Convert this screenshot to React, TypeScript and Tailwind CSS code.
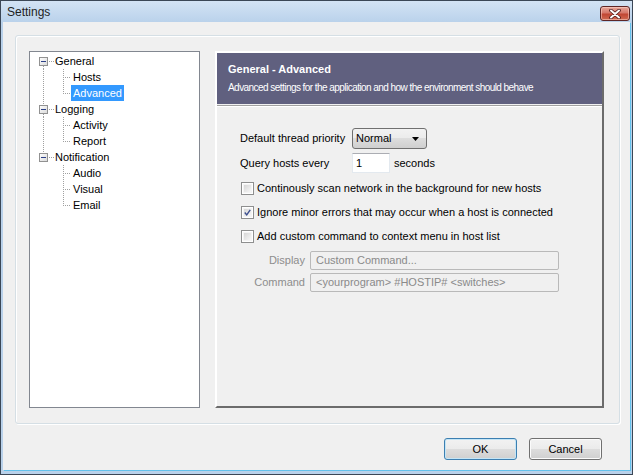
import React from "react";

const DOT = "#a0a0a0";

type Row = {
  label: string;
  root?: boolean;
  first?: boolean;
  hasNext?: boolean;
  cont?: boolean;
  last?: boolean;
  selected?: boolean;
};

const rows: Row[] = [
  { label: "General", root: true, first: true, hasNext: true },
  { label: "Hosts", cont: true },
  { label: "Advanced", cont: true, last: true, selected: true },
  { label: "Logging", root: true, hasNext: true },
  { label: "Activity", cont: true },
  { label: "Report", cont: true, last: true },
  { label: "Notification", root: true },
  { label: "Audio" },
  { label: "Visual" },
  { label: "Email", last: true },
];

function RootGuide({ first, hasNext }: { first?: boolean; hasNext?: boolean }) {
  return (
    <svg width="25" height="16" shapeRendering="crispEdges" className="shrink-0">
      <defs>
        <linearGradient id="exp" x1="0" y1="0" x2="1" y2="1">
          <stop offset="0" stopColor="#ffffff" />
          <stop offset="1" stopColor="#d8d8d8" />
        </linearGradient>
      </defs>
      {!first && <line x1="13.5" y1="0" x2="13.5" y2="4" stroke={DOT} strokeDasharray="1 1" />}
      {hasNext && <line x1="13.5" y1="13" x2="13.5" y2="16" stroke={DOT} strokeDasharray="1 1" />}
      <rect x="9.5" y="4.5" width="8" height="8" fill="url(#exp)" stroke="#919191" />
      <line x1="11" y1="8.5" x2="16" y2="8.5" stroke="#2c3f87" />
      <line x1="19" y1="8.5" x2="24" y2="8.5" stroke={DOT} strokeDasharray="1 1" />
    </svg>
  );
}

function ChildGuide({ cont, last }: { cont?: boolean; last?: boolean }) {
  return (
    <svg width="41" height="16" shapeRendering="crispEdges" className="shrink-0">
      {cont && <line x1="13.5" y1="0" x2="13.5" y2="16" stroke={DOT} strokeDasharray="1 1" />}
      <line x1="33.5" y1="0" x2="33.5" y2={last ? 9 : 16} stroke={DOT} strokeDasharray="1 1" />
      <line x1="35" y1="8.5" x2="41" y2="8.5" stroke={DOT} strokeDasharray="1 1" />
    </svg>
  );
}

function Tree() {
  return (
    <div className="w-[171px] h-[357px] shrink-0 bg-white border border-[#828790] pt-[1px]">
      {rows.map((r) => (
        <div key={r.label} className="flex h-[16px] leading-[16px] items-center">
          {r.root ? <RootGuide first={r.first} hasNext={r.hasNext} /> : <ChildGuide cont={r.cont} last={r.last} />}
          <span
            className={
              r.selected
                ? "bg-[#3399ff] text-white px-[2px] h-[16px]"
                : r.root
                ? "pl-[0px] text-black"
                : "pl-[2px] text-black"
            }
          >
            {r.label}
          </span>
        </div>
      ))}
    </div>
  );
}

function Checkbox({ checked }: { checked?: boolean }) {
  return (
    <div className="w-[13px] h-[13px] shrink-0 border border-[#8e8f8f] bg-white p-[1px]">
      <div className="w-full h-full bg-[linear-gradient(135deg,#d6d6d6,#f7f7f7)] border border-[#f4f4f4] flex items-center justify-center">
        {checked && (
          <svg width="9" height="9" viewBox="0 0 9 9">
            <path d="M1 4.5 L3.5 7.5 L8 1" fill="none" stroke="#3d4f8f" strokeWidth="1.8" />
          </svg>
        )}
      </div>
    </div>
  );
}

function CheckRow({ checked, label }: { checked?: boolean; label: string }) {
  return (
    <div className="flex items-center h-[13px] ml-[1px] gap-[3px]">
      <Checkbox checked={checked} />
      <span className="leading-[13px]">{label}</span>
    </div>
  );
}

function Panel() {
  return (
    <div className="w-[389px] h-[357px] shrink-0 flex flex-col border-t-2 border-l-2 border-t-white border-l-white border-r-2 border-b-2 border-r-[#6c6c6c] border-b-[#6c6c6c]">
      <div className="h-[51px] bg-[#60607f] text-white pl-[11px] pt-[10px]">
        <div className="font-bold text-[11px] leading-[13px]">General - Advanced</div>
        <div className="text-[10px] leading-[12px] mt-[6px] tracking-[-0.55px]">
          Advanced settings for the application and how the environment should behave
        </div>
      </div>
      <div className="mt-[1px] border-t border-[#a0a0a0]" />
      <div className="border-t border-white" />
      <div className="flex flex-col pl-[23px] pt-[21px]">
        <div className="flex items-center h-[21px]">
          <span className="w-[112px]">Default thread priority</span>
          <div className="w-[75px] h-[21px] rounded-[3px] border border-[#707070] bg-[linear-gradient(#f2f2f2_0%,#ebebeb_50%,#dddddd_50%,#cfcfcf_100%)] flex items-center pl-[3px] pr-[7px] justify-between">
            <span className="text-black">Normal</span>
            <svg width="7" height="4" viewBox="0 0 7 4">
              <path d="M0 0 H7 L3.5 4 Z" fill="#000" />
            </svg>
          </div>
        </div>
        <div className="flex items-center h-[20px] mt-[4px]">
          <span className="w-[112px]">Query hosts every</span>
          <div className="w-[38px] h-[20px] bg-white border border-[#e3e9ef] border-t-[#abadb3] pl-[3px] leading-[18px]">1</div>
          <span className="ml-[4px]">seconds</span>
        </div>
        <div className="mt-[9px]">
          <CheckRow label="Continously scan network in the background for new hosts" />
        </div>
        <div className="mt-[11px]">
          <CheckRow checked label="Ignore minor errors that may occur when a host is connected" />
        </div>
        <div className="mt-[11px]">
          <CheckRow label="Add custom command to context menu in host list" />
        </div>
        <div className="flex items-center h-[19px] mt-[8px]">
          <span className="w-[65px] text-right text-[#8d8d8d]">Display</span>
          <div className="ml-[5px] w-[249px] h-[19px] border border-[#b9b9b9] rounded-[2px] bg-[#f0f0f0] text-[#8a8a8a] pl-[5px] leading-[17px]">
            Custom Command...
          </div>
        </div>
        <div className="flex items-center h-[19px] mt-[3px]">
          <span className="w-[65px] text-right text-[#8d8d8d]">Command</span>
          <div className="ml-[5px] w-[249px] h-[19px] border border-[#b9b9b9] rounded-[2px] bg-[#f0f0f0] text-[#8a8a8a] pl-[5px] leading-[17px]">
            {"<yourprogram> #HOSTIP# <switches>"}
          </div>
        </div>
      </div>
    </div>
  );
}

function Button({ label, focused }: { label: string; focused?: boolean }) {
  return (
    <div
      className={
        "w-[73px] h-[22px] rounded-[3px] border flex items-center justify-center bg-[linear-gradient(#f2f2f2_0%,#ebebeb_50%,#dddddd_50%,#cfcfcf_100%)] " +
        (focused ? "border-[#3c7fb1] shadow-[inset_0_0_0_1px_#c4e5f6]" : "border-[#707070] shadow-[inset_0_0_0_1px_#fbfbfb]")
      }
    >
      {label}
    </div>
  );
}

export default function App() {
  return (
    <div className="w-[633px] h-[475px] flex flex-col border border-[#3b4756] bg-[#b9d1ea] font-['Liberation_Sans',Arial,sans-serif] text-[11px] text-black overflow-hidden">
      {/* Title bar */}
      <div className="h-[21px] shrink-0 flex items-center justify-between pl-[6px] pr-[2px] bg-[linear-gradient(#d3e3f4,#bad2eb)]">
        <span className="text-[12px] text-[#1e1e1e] leading-[14px] mt-[1px]">Settings</span>
        <div className="w-[30px] h-[15px] mt-[4px] rounded-[3px] border border-[#5e2626] bg-[linear-gradient(#e7a79b_0%,#d5776a_45%,#c14634_55%,#cf6a52_100%)] flex items-center justify-center shadow-[inset_0_0_0_1px_rgba(255,220,210,0.5)]">
          <svg width="12" height="10" viewBox="0 0 12 10">
            <path d="M2 1.5 L10 8.5 M10 1.5 L2 8.5" stroke="#4a1a1a" strokeWidth="3.6" strokeLinecap="round" />
            <path d="M2 1.5 L10 8.5 M10 1.5 L2 8.5" stroke="#ffffff" strokeWidth="2" strokeLinecap="round" />
          </svg>
        </div>
      </div>

      {/* Client area */}
      <div className="flex-1 mx-[2px] mb-[4px] bg-[#f0f0f0] flex flex-col shadow-[1px_1px_0_#62c1ec]">
        <div className="mt-[13px] ml-[12px] w-[605px] h-[389px] rounded-[3px] border border-[#d5dfe5] shadow-[inset_1px_1px_0_#ffffff,1px_1px_0_#ffffff] flex pl-[13px] pt-[15px] gap-[15px]">
          <Tree />
          <Panel />
        </div>
        <div className="flex justify-end gap-[12px] mt-[14px] mr-[28px]">
          <Button label="OK" focused />
          <Button label="Cancel" />
        </div>
      </div>
    </div>
  );
}
